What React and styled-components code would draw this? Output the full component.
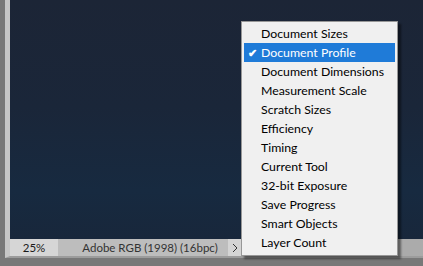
import React from 'react';
import styled, { createGlobalStyle } from 'styled-components';

const GlobalStyle = createGlobalStyle`
  html, body {
    margin: 0;
    padding: 0;
    background: #787878;
    overflow: hidden;
  }
`;

const Page = styled.div`
  position: relative;
  width: 423px;
  height: 266px;
  background: #787878;
  font-family: Lato, "Open Sans", sans-serif;
`;

const Frame = styled.div`
  display: flex;
  flex-direction: column;
  margin-left: 5px;
  border-left: 5px solid #c6c6c6;
  border-bottom: 2px solid #9c9c9c;
`;

const Canvas = styled.div`
  height: 239px;
  background: linear-gradient(180deg, #1c2536 0%, #1a2639 45%, #172a40 80%, #18273b 100%);
`;

const StatusBar = styled.div`
  display: flex;
  height: 17px;
  background: #ababab;
  font-size: 11.5px;
  color: #1a1a1a;
`;

const Zoom = styled.div`
  width: 48px;
  display: flex;
  align-items: center;
  justify-content: center;
  background: #d6d6d6;
`;

const Info = styled.div`
  width: 156px;
  padding-left: 14px;
  display: flex;
  align-items: center;
  justify-content: center;
  background: #bdbdbd;
  color: #333333;
`;

const Arrow = styled.div`
  width: 13px;
  display: flex;
  align-items: center;
  justify-content: center;
  background: #d4d4d4;
`;

const Menu = styled.ul`
  position: absolute;
  left: 241px;
  top: 21px;
  width: 151px;
  margin: 0;
  padding: 2px 2px 3px;
  list-style: none;
  background: #f0f0f0;
  border: 1px solid #979797;
  box-shadow: 3px 3px 2px rgba(0, 0, 0, 0.45);
`;

const Item = styled.li`
  position: relative;
  height: 19px;
  line-height: 19px;
  padding-left: 17px;
  font-size: 12.3px;
  color: ${({ $active }) => ($active ? '#ffffff' : '#000000')};
  background: ${({ $active }) => ($active ? '#1f7bd8' : 'transparent')};
`;

const Check = styled.span`
  position: absolute;
  left: 4px;
  top: 0;
  font-size: 11px;
  font-weight: bold;
`;

const items = [
  'Document Sizes',
  'Document Profile',
  'Document Dimensions',
  'Measurement Scale',
  'Scratch Sizes',
  'Efficiency',
  'Timing',
  'Current Tool',
  '32-bit Exposure',
  'Save Progress',
  'Smart Objects',
  'Layer Count',
];

export default function App() {
  return (
    <>
      <GlobalStyle />
      <Page>
        <Frame>
          <Canvas />
          <StatusBar>
            <Zoom>25%</Zoom>
            <Info>Adobe RGB (1998) (16bpc)</Info>
            <Arrow>
              <svg width="6" height="10" viewBox="0 0 6 10">
                <path d="M1 1 L5 5 L1 9" fill="none" stroke="#333" strokeWidth="1" />
              </svg>
            </Arrow>
          </StatusBar>
        </Frame>
        <Menu>
          {items.map((label) => (
            <Item key={label} $active={label === 'Document Profile'}>
              {label === 'Document Profile' && <Check>✔</Check>}
              {label}
            </Item>
          ))}
        </Menu>
      </Page>
    </>
  );
}
